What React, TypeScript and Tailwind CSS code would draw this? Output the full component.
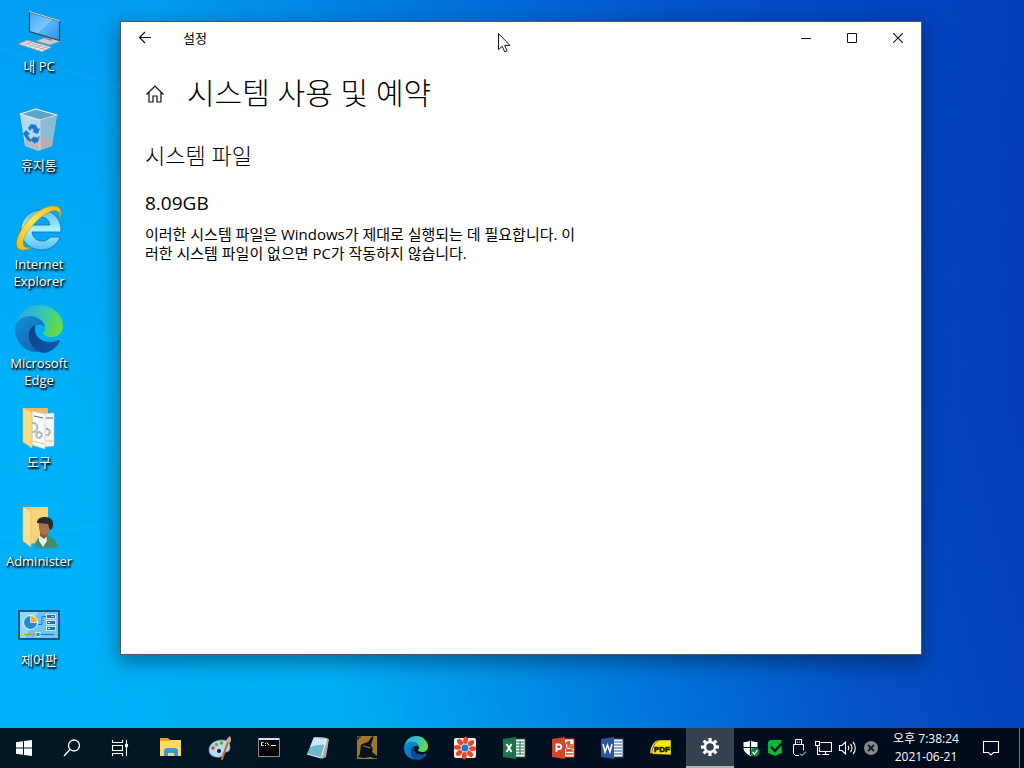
import type { ReactNode } from "react";

type Item = { label: string; icon: ReactNode };

/* ---------- shared drawings ---------- */

function EdgeLogo({ size, id }: { size: number; id: string }) {
  return (
    <svg width={size} height={size} viewBox="0 0 48 48" aria-hidden="true">
      <defs>
        <linearGradient id={id + "top"} x1="0" y1="0.3" x2="1" y2="0.6">
          <stop offset="0" stopColor="#2aa8e0" />
          <stop offset="0.45" stopColor="#2fc3c4" />
          <stop offset="1" stopColor="#66dc3c" />
        </linearGradient>
        <linearGradient id={id + "mid"} x1="0" y1="0" x2="0.6" y2="1">
          <stop offset="0" stopColor="#1390d8" />
          <stop offset="1" stopColor="#1266b8" />
        </linearGradient>
        <linearGradient id={id + "low"} x1="0" y1="0.2" x2="1" y2="0.8">
          <stop offset="0" stopColor="#11418b" />
          <stop offset="1" stopColor="#0c5aa6" />
        </linearGradient>
      </defs>
      <path d="M1 21C2 9 12 0 24 0c14 0 24 10 24 21 0 7-5 11-11 11-6 0-9-2-9-4 0-1 2-2 2-5 0-6-6-11-14-11C9 12 3 15 1 21Z" fill={`url(#${id}top)`} />
      <path d="M0 24C0 16 7 11 15 11c8 0 14 5 15 11-3-3-8-3-12 1-6 6-4 18 6 24C10 48 0 37 0 24Z" fill={`url(#${id}mid)`} />
      <path d="M19 20c-5 4-7 11-4 17 3 7 9 11 15 11 7-2 12-6 15-12 0-1-1-1-2-1-3 2-6 2-9 2-8 0-14-6-14-12 0-2 0-4-1-5Z" fill={`url(#${id}low)`} />
    </svg>
  );
}

/* ---------- desktop icons ---------- */

const ComputerIcon = () => (
  <svg width="48" height="48" viewBox="0 0 48 48" aria-hidden="true">
    <defs>
      <linearGradient id="screen" x1="0" y1="0" x2="1" y2="1">
        <stop offset="0" stopColor="#3fa6f2" />
        <stop offset="0.5" stopColor="#7cc8ff" />
        <stop offset="0.52" stopColor="#56b4f8" />
        <stop offset="1" stopColor="#2b95ec" />
      </linearGradient>
    </defs>
    <path d="M21 33l11-4 14 4-11 4Z" fill="#c7cdd1" stroke="#8c979e" strokeWidth=".7" />
    <path d="M30 26l7 2v5l-7-2Z" fill="#8c9498" />
    <path d="M14.500 4l30 9v19.500l-30-9Z" fill="url(#screen)" stroke="#37454e" strokeWidth="1.200" />
    <path d="M14 3.500l31 9.300" stroke="#d8d6cd" />
    <path d="M3 36l9-4 25 7-10 5Z" fill="#e4e7e8" stroke="#7d868b" strokeWidth=".8" />
    <path d="M6 34.500l24 7M9 33.200l24 7M9 37.500l9-4M14 39l9-4M19 40.500l9-4M24 42l9-4" stroke="#a0a8ac" strokeWidth=".7" />
  </svg>
);

const RecycleBinIcon = () => (
  <svg width="48" height="48" viewBox="0 0 48 48" aria-hidden="true">
    <path d="M5 7l16-5 21 6-5 31-14 5-13-5Z" fill="#c9dde8" fillOpacity=".7" />
    <path d="M5 7l16-5 21 6-17 5Z" fill="#5aa5c6" stroke="#e7f1f5" strokeWidth="1.200" strokeLinejoin="round" />
    <path d="M25 13l17-5-5 31-12 4Z" fill="#8fb4cb" fillOpacity=".75" />
    <path d="M5 7l20 6v30L10 38Z" fill="#c9e0ee" fillOpacity=".65" />
    <path d="M9 33l14-4 15 4-1 6-12 4-15-5Z" fill="#c4a9a6" fillOpacity=".7" />
    <path d="M25 13v30" stroke="#dbe9f0" strokeWidth=".7" />
    <g fill="#1779cf">
      <path d="M13 21l3-4 5 1 2 4 2-1-2 6-6-2 2-1-2-3-2 3Z" />
      <path d="M11 23l4 4-2 1 2 4h2l-1 3-4-2-3-5-1-1Z" />
      <path d="M19 30l4 1 2-3-2 7-3 1v1l-4-4 3-4Z" />
    </g>
  </svg>
);

const ExplorerEIcon = () => (
  <svg width="48" height="48" viewBox="0 0 48 48" aria-hidden="true">
    <defs>
      <linearGradient id="ieblue" x1="0" y1="0" x2="0" y2="1">
        <stop offset="0" stopColor="#58bff0" />
        <stop offset=".5" stopColor="#a8f3ff" />
        <stop offset="1" stopColor="#52bff1" />
      </linearGradient>
      <linearGradient id="iegold" x1="0" y1="1" x2="1" y2="0">
        <stop offset="0" stopColor="#f4b80c" />
        <stop offset=".5" stopColor="#ffe45a" />
        <stop offset="1" stopColor="#f3b60e" />
      </linearGradient>
    </defs>
    <path fillRule="evenodd" d="M46 26H17c1 6 5 9 10 9 4 0 6-1 8-4h10c-3 8-10 13-18 13C15 44 6 36 6 24 6 12 15 4 26 4c12 0 21 9 20 22ZM17 19h18c-1-5-4-8-9-8s-8 3-9 8Z" fill="url(#ieblue)" stroke="#2174ad" strokeWidth=".9" />
    <path d="M45 12C47 6 46 1 40 0 31-1 18 7 9 20 2 30-1 40 4 43c3 2 8 1 13-2-4 1-7 1-8-1-3-4 2-14 10-22C27 9 37 3 42 5c3 1 3 4 3 7Z" fill="url(#iegold)" stroke="#c78b0b" strokeWidth=".6" />
  </svg>
);

const ToolsFolderIcon = () => (
  <svg width="48" height="48" viewBox="0 0 48 48" aria-hidden="true">
    <path d="M8 4h25v34H13Z" fill="#e8bd5b" />
    <path d="M26 10l13-1v33l-12 1Z" fill="#f4f5f5" stroke="#c6c8c9" strokeWidth=".6" />
    <path d="M17 7l13 3v35l-13-4Z" fill="#fbfbfb" stroke="#bfc5c8" strokeWidth=".6" />
    <path d="M19 12l9 2M31 14h7" stroke="#394047" strokeWidth=".8" />
    <g fill="none" stroke="#a3b0b7" strokeWidth="2.200" strokeDasharray="2 .4">
      <path d="M17 19c7-1 7 10 0 9" />
      <circle cx="24" cy="31" r="2.800" />
      <path d="M31 25c5-1 5 7 0 6" />
    </g>
    <path d="M18 37l11 3M31 37h7" stroke="#d9b660" strokeWidth=".8" />
    <path d="M8 4l9 4v36l-9-6Z" fill="#fbdc87" stroke="#e6be60" strokeWidth=".6" />
  </svg>
);

const UserFolderIcon = () => (
  <svg width="48" height="48" viewBox="0 0 48 48" aria-hidden="true">
    <path d="M8 4h25v33H12Z" fill="#f1cb6e" />
    <path d="M16 8l17-4v33l-17 4Z" fill="#f8d37a" />
    <path d="M8 4l8 4v36l-8-6Z" fill="#fcdf91" stroke="#e6be60" strokeWidth=".6" />
    <path d="M20 44c0-7 4-11 11-12 7 2 11 6 12 12-6 2-17 2-23 0Z" fill="#438d6b" />
    <path d="M24 33l7-2 1 7-4 6-4-6Z" fill="#e9eee9" />
    <path d="M25 25h8v7l-4 4-4-3Z" fill="#8b5a39" />
    <path d="M24 18c-1 8 1 14 5 14 5 0 8-6 8-12l-5-4Z" fill="#a7714d" />
    <path d="M22 20c0-4 3-6 8-6 6 0 9 4 8 9-1 4-3 4-3 4l-2-6c-4 0-7-1-11-1Z" fill="#292b2b" />
  </svg>
);

const ControlPanelIcon = () => (
  <svg width="48" height="48" viewBox="0 0 48 48" aria-hidden="true">
    <rect x="4" y="9" width="40" height="28" fill="#6fc4f4" stroke="#155985" strokeWidth="2" />
    <path d="M5 10h18L10 36H5Z" fill="#93d7fa" />
    <circle cx="15.500" cy="20.500" r="7" fill="#2787d4" stroke="#effaff" />
    <path d="M15.500 20.500V13.500a7 7 0 0 1 7 7Z" fill="#f4ae2d" stroke="#fff" strokeWidth=".7" />
    <path d="M23 22.500h4v-8h4" fill="none" stroke="#187cc1" />
    <g fill="#1677bb" stroke="#eaf9ff" strokeWidth=".8">
      <rect x="31.500" y="12.500" width="9" height="4" />
      <rect x="31.500" y="18.500" width="9" height="4" />
      <rect x="31.500" y="24.500" width="9" height="4" />
    </g>
    <path d="M36 14.500h3" stroke="#f2b13b" />
    <path d="M33 20.500h2M33 26.500h2" stroke="#fff" />
    <path d="M9 32.500h12" stroke="#df8f18" strokeWidth="1.200" />
    <path d="M25 32.500h14" stroke="#2379aa" strokeWidth="1" />
    <rect x="21" y="30.500" width="4" height="4" fill="#178ad5" stroke="#fff" strokeWidth=".7" />
  </svg>
);

const desktopItems: Item[] = [
  { label: "내 PC", icon: <ComputerIcon /> },
  { label: "휴지통", icon: <RecycleBinIcon /> },
  { label: "Internet Explorer", icon: <ExplorerEIcon /> },
  { label: "Microsoft Edge", icon: <EdgeLogo size={48} id="desk" /> },
  { label: "도구", icon: <ToolsFolderIcon /> },
  { label: "Administer", icon: <UserFolderIcon /> },
  { label: "제어판", icon: <ControlPanelIcon /> },
];

/* ---------- taskbar icons ---------- */

const StartIcon = () => (
  <svg width="16" height="16" viewBox="0 0 16 16" fill="#fff" aria-hidden="true">
    <path d="M0 2.200L7 1.200V7.500H0ZM8 1L16 0v7.500H8ZM0 8.500h7v6.300l-7-1ZM8 8.500h8V16l-8-1Z" />
  </svg>
);

const SearchIcon = () => (
  <svg width="18" height="18" viewBox="0 0 18 18" fill="none" stroke="#fff" strokeWidth="1.300" aria-hidden="true">
    <circle cx="11" cy="6.500" r="5.500" />
    <path d="M7 10.500L1 17" />
  </svg>
);

const TaskViewIcon = () => (
  <svg width="18" height="16" viewBox="0 0 18 16" fill="none" stroke="#fff" strokeWidth="1.100" aria-hidden="true">
    <path d="M1.500 0v2.500h10V0M1.500 16v-2.500h10V16M15.500 0v16" />
    <rect x="1.500" y="5.500" width="10" height="5" />
    <rect x="14.500" y="4.500" width="2" height="2" fill="#fff" />
  </svg>
);

const taskItems: Item[] = [
  {
    label: "파일 탐색기",
    icon: (
      <svg width="24" height="24" viewBox="0 0 24 24" aria-hidden="true">
        <path d="M1 2h8l2 2h11v16H1Z" fill="#e8a51d" />
        <path d="M1 5h8l2-1h11v16H1Z" fill="#ffd867" />
        <path d="M5 20v-6l2-2h10l2 2v6h-4v-3H9v3Z" fill="#3a96de" />
      </svg>
    ),
  },
  {
    label: "그림판",
    icon: (
      <svg width="24" height="24" viewBox="0 0 24 24" aria-hidden="true">
        <path d="M1 14C1 8 7 4 14 4c6 0 8 3 8 7s-2 5-4 5-2 5-6 5C6 22 1 19 1 14Z" fill="#b8d9ee" stroke="#6d9bb9" strokeWidth=".7" />
        <circle cx="5" cy="12" r="1.800" fill="#df3c26" />
        <circle cx="8.500" cy="8.500" r="1.800" fill="#71b52e" />
        <circle cx="13.500" cy="7" r="1.800" fill="#59a63b" />
        <circle cx="11" cy="15" r="2" fill="#071923" />
        <path d="M20 6l-6 17" stroke="#c36a26" strokeWidth="2.200" strokeLinecap="round" />
        <path d="M18 6c0-3 2-4 4-6 1 3 2 3 0 7Z" fill="#d6a77a" />
      </svg>
    ),
  },
  {
    label: "명령 프롬프트",
    icon: (
      <svg width="24" height="24" viewBox="0 0 24 24" aria-hidden="true">
        <rect x="1.500" y="2.500" width="21" height="18" fill="#050505" stroke="#858b8e" />
        <path d="M2 3h20" stroke="#d7dcdf" strokeWidth="2" />
        <path d="M6.500 6.500H4.500v3h2M8.500 7v1M8.500 9v1M10 6.500l2 3M14 9.500h5" fill="none" stroke="#fff" strokeWidth="1" />
      </svg>
    ),
  },
  {
    label: "메모장",
    icon: (
      <svg width="24" height="24" viewBox="0 0 24 24" aria-hidden="true">
        <path d="M8 1l15 2-3 18-4 2Z" fill="#a6aeb0" />
        <path d="M8 1l13 1-6 20-14-4Z" fill="#72b5c9" />
        <path d="M8 1l13 1-2 7C12 8 9 10 4 11Z" fill="#c6eaf0" />
        <path d="M1 18l14 4 6-20" fill="none" stroke="#e9f4f5" />
        <path d="M8 1.500l13 1" stroke="#8b969a" strokeDasharray="1 1" />
      </svg>
    ),
  },
  {
    label: "청소 도구",
    icon: (
      <svg width="24" height="24" viewBox="0 0 24 24" aria-hidden="true">
        <rect x="2" y="0" width="20" height="23" fill="#9d7626" />
        <path d="M18 0c1 3-2 6-2 10 2 1 2 4 1 6l5 4v2c-3 1-5-1-7-1s-5 2-12 0c3-3 2-8 3-12 2-2 6-2 8-4 1-2 2-4 4-5Z" fill="#03121c" />
        <path d="M3 1h3M3 1v3" stroke="#03121c" strokeWidth="1.200" />
        <path d="M8 10c3 0 5 2 8 2" fill="none" stroke="#9d7626" strokeWidth="1.200" />
      </svg>
    ),
  },
  { label: "Microsoft Edge", icon: <EdgeLogo size={24} id="bar" /> },
  {
    label: "사진 뷰어",
    icon: (
      <svg width="24" height="24" viewBox="0 0 24 24" aria-hidden="true">
        <rect x="1" y="2" width="22" height="20" rx="2" fill="#eef1f3" />
        <g fill="#ee4523">
          {[5, 50, 95, 140, 185, 230, 275, 320].map((angle) => (
            <ellipse key={angle} cx="12" cy="4.300" rx="2.400" ry="3.600" transform={`rotate(${angle} 12 12)`} />
          ))}
        </g>
        <circle cx="12" cy="12" r="3.500" fill="#1976d2" />
      </svg>
    ),
  },
  {
    label: "Excel",
    icon: (
      <svg width="24" height="24" viewBox="0 0 24 24" aria-hidden="true">
        <rect x="12" y="3" width="11" height="18" fill="#fff" stroke="#207346" />
        <path d="M14 6h8M14 9h8M14 12h8M14 15h8M14 18h8M18 5v14" stroke="#207346" />
        <path d="M1 3l13-2v22L1 21Z" fill="#207346" />
        <path d="M4.500 8l5 8M9.500 8l-5 8" stroke="#fff" strokeWidth="1.900" />
      </svg>
    ),
  },
  {
    label: "PowerPoint",
    icon: (
      <svg width="24" height="24" viewBox="0 0 24 24" aria-hidden="true">
        <rect x="12" y="3" width="11" height="18" fill="#fff" stroke="#d24726" />
        <path d="M15 15h7M15 18h7M17 6v5h5a4 4 0 1 1-5-5ZM18.500 5v4h4" fill="none" stroke="#d24726" strokeWidth="1.400" />
        <path d="M1 3l13-2v22L1 21Z" fill="#d24726" />
        <path d="M5.500 16V8.500H8a2 2 0 0 1 0 4.500H5.500" fill="none" stroke="#fff" strokeWidth="1.900" />
      </svg>
    ),
  },
  {
    label: "Word",
    icon: (
      <svg width="24" height="24" viewBox="0 0 24 24" aria-hidden="true">
        <rect x="12" y="3" width="11" height="18" fill="#fff" stroke="#2b579a" />
        <path d="M14 6h8M14 9h8M14 12h8M14 15h8M14 18h8" stroke="#2b579a" />
        <path d="M1 3l13-2v22L1 21Z" fill="#2b579a" />
        <path d="M3 8l2 8 2.500-7L10 16l2-8" fill="none" stroke="#fff" strokeWidth="1.500" />
      </svg>
    ),
  },
  {
    label: "PDF",
    icon: (
      <svg width="24" height="24" viewBox="0 0 24 24" aria-hidden="true">
        <path d="M1 17C2 9 5 5 10 4L7 18Z" fill="#d9d79a" />
        <path d="M3 18C3 11 6 6 11 4h11v15Z" fill="#fbe716" stroke="#16150a" strokeWidth=".5" />
        <text x="13" y="16" textAnchor="middle" fontFamily="Liberation Sans, sans-serif" fontWeight="bold" fontSize="8" fill="#171700" stroke="#171700" strokeWidth=".6">PDF</text>
      </svg>
    ),
  },
];

const SettingsIcon = () => (
  <svg width="20" height="20" viewBox="0 0 20 20" fill="none" stroke="#fff" aria-hidden="true">
    <circle cx="10" cy="10" r="5" strokeWidth="2.400" />
    {[0, 45, 90, 135, 180, 225, 270, 315].map((angle) => (
      <path key={angle} d="M10 4.500V1" strokeWidth="3.200" transform={`rotate(${angle} 10 10)`} />
    ))}
  </svg>
);

const trayItems: Item[] = [
  {
    label: "Windows 보안",
    icon: (
      <svg width="18" height="18" viewBox="0 0 18 18" aria-hidden="true">
        <path d="M8.500 1C6 3 4 3 1.500 3v6c0 4 4 6 7 8 3-2 7-4 7-8V3c-3 0-4.500 0-7-2Z" fill="#fff" />
        <path d="M8.500 1v15M1 8.500h15" stroke="#020f1c" strokeWidth="1.200" />
        <circle cx="13" cy="13" r="4.500" fill="#108044" />
        <path d="M10.500 13l2 2 3-4" fill="none" stroke="#fff" strokeWidth="1.200" />
      </svg>
    ),
  },
  {
    label: "백신",
    icon: (
      <svg width="18" height="18" viewBox="0 0 18 18" aria-hidden="true">
        <path d="M4 1h11l1 13-7 3-7-3V3Z" fill="#06b73a" />
        <path d="M5 8l4 4 6-7" fill="none" stroke="#02141b" strokeWidth="2.400" />
      </svg>
    ),
  },
  {
    label: "하드웨어 안전하게 제거",
    icon: (
      <svg width="18" height="18" viewBox="0 0 18 18" fill="none" stroke="#fff" aria-hidden="true">
        <path d="M5.500 5.500v-5h6v5M7 3h1M9 3h1M9 16.500H5.500l-2-2v-9h10v6M10 14.500l2 2 4-4" />
      </svg>
    ),
  },
  {
    label: "네트워크",
    icon: (
      <svg width="18" height="18" viewBox="0 0 18 18" fill="none" stroke="#fff" strokeWidth="1.100" aria-hidden="true">
        <path d="M6.500 3.500h11v9H5.500V8M8 15.500h7M11.500 12.500v3M1.500 2.500h4v4h-4ZM3.500 6.500v9h3" />
      </svg>
    ),
  },
  {
    label: "볼륨",
    icon: (
      <svg width="18" height="18" viewBox="0 0 18 18" fill="none" stroke="#fff" strokeWidth="1.100" aria-hidden="true">
        <path d="M1.500 6.500H4L7.500 3v12L4 11.500H1.500ZM10 7c1 1 1 3 0 4M12.500 5c2 2 2 6 0 8M15 3c3 3 3 9 0 12" />
      </svg>
    ),
  },
  {
    label: "꺼짐",
    icon: (
      <svg width="16" height="16" viewBox="0 0 16 16" aria-hidden="true">
        <circle cx="8" cy="8" r="7" fill="#868a8d" />
        <path d="M5 5l6 6M11 5l-6 6" stroke="#111820" strokeWidth="1.800" />
      </svg>
    ),
  },
];

/* ---------- page ---------- */

function SettingsWindow() {
  return (
    <section
      aria-label="설정"
      className="absolute top-[21px] right-[102px] bottom-[73px] left-[120px] flex flex-col border border-[#555] bg-white text-black shadow-[0_6px_18px_2px_rgba(0,0,0,0.35)]"
    >
      <header className="flex h-8 items-center">
        <button type="button" aria-label="뒤로" className="flex h-8 w-12 items-center justify-center">
          <svg width="14" height="14" viewBox="0 0 14 14" fill="none" stroke="#111" strokeWidth="1.200" aria-hidden="true">
            <path d="M13 6.500H1.500M7 1L1.500 6.500 7 12" />
          </svg>
        </button>
        <span className="ml-3.5 text-[13px] leading-4">설정</span>
        <div className="ml-auto flex">
          <button type="button" aria-label="최소화" className="flex h-8 w-[46px] items-center justify-center">
            <svg width="10" height="10" viewBox="0 0 10 10" stroke="#111" aria-hidden="true"><path d="M0 5.500h10" /></svg>
          </button>
          <button type="button" aria-label="최대화" className="flex h-8 w-[46px] items-center justify-center">
            <svg width="10" height="10" viewBox="0 0 10 10" fill="none" stroke="#111" aria-hidden="true"><path d="M.5.5h9v9h-9Z" /></svg>
          </button>
          <button type="button" aria-label="닫기" className="flex h-8 w-[46px] items-center justify-center">
            <svg width="10" height="10" viewBox="0 0 10 10" stroke="#111" strokeWidth="1.100" aria-hidden="true"><path d="M0 0l10 10M10 0L0 10" /></svg>
          </button>
        </div>
      </header>
      <div className="flex flex-col px-6 pt-5">
        <div className="flex h-10 items-center gap-[22px]">
          <button type="button" aria-label="홈" className="flex w-5 justify-center">
            <svg width="18" height="18" viewBox="0 0 18 18" fill="none" stroke="#111" strokeWidth="1.200" aria-hidden="true">
              <path d="M.5 9.500L9 1l8.500 8.500M3 7v10h4v-6h4v6h4V7" />
            </svg>
          </button>
          <h1 className="pb-0.5 text-[30px] leading-10 font-light">시스템 사용 및 예약</h1>
        </div>
        <h2 className="mt-[25px] text-[22px] leading-8 font-light">시스템 파일</h2>
        <p className="mt-5 text-[19px] leading-6">8.09GB</p>
        <p className="mt-2.5 max-w-[440px] text-[15px] leading-[19px] break-all">
          이러한 시스템 파일은 Windows가 제대로 실행되는 데 필요합니다. 이러한 시스템 파일이 없으면 PC가 작동하지 않습니다.
        </p>
      </div>
    </section>
  );
}

export default function App() {
  return (
    <div className="flex min-h-screen flex-col overflow-hidden bg-[linear-gradient(75deg,#00b2fa_0%,#00aef5_29%,#0092e6_42%,#0070d8_57%,#0452c4_71%,#0444be_84%,#0438b0_100%)] font-['Open_Sans','Noto_Sans_CJK_KR',sans-serif]">
      <main className="relative flex-1 bg-[linear-gradient(to_bottom,rgba(0,90,225,0.2),transparent_55%)]">
        <svg className="absolute inset-0 h-full w-full" viewBox="0 0 1024 728" preserveAspectRatio="none" aria-hidden="true">
          <path d="M0 48L120 88M0 538L120 523" stroke="#fff" strokeOpacity=".05" />
        </svg>
        <nav aria-label="바탕 화면" className="relative flex w-[78px] flex-col">
          {desktopItems.map((item) => (
            <a key={item.label} href="#" className="flex h-[99px] flex-col items-center pt-2">
              {item.icon}
              <span className="mt-0.5 text-center text-[13px] leading-[17px] text-white [text-shadow:1px_1px_2px_#000,1px_2px_2px_#000]">
                {item.label}
              </span>
            </a>
          ))}
        </nav>
        <SettingsWindow />
        <svg className="absolute top-[33px] left-[498px]" width="13" height="20" viewBox="0 0 13 20" aria-hidden="true">
          <path d="M.5.5v16.200l3.700-3.500 2.500 5.600 2.400-1-2.400-5.400h5.200Z" fill="#fff" stroke="#111c28" />
        </svg>
      </main>
      <footer className="flex h-10 items-center bg-[linear-gradient(to_right,#001a24,#000f1f_60%,#000a1a)] text-white">
        <button type="button" aria-label="시작" className="flex h-10 w-12 items-center justify-center"><StartIcon /></button>
        <button type="button" aria-label="검색" className="flex h-10 w-12 items-center justify-center"><SearchIcon /></button>
        <button type="button" aria-label="작업 보기" className="flex h-10 w-12 items-center justify-center"><TaskViewIcon /></button>
        <div className="ml-[3px] flex gap-px">
          {taskItems.map((item) => (
            <button key={item.label} type="button" aria-label={item.label} className="flex h-10 w-12 items-center justify-center">
              {item.icon}
            </button>
          ))}
          <button type="button" aria-label="설정" className="flex h-10 w-12 items-center justify-center border-b-2 border-[#b0b4b8] bg-[#36424f]">
            <SettingsIcon />
          </button>
        </div>
        <div className="ml-auto flex items-center">
          <div className="mr-[3px] flex">
            {trayItems.map((item) => (
              <button key={item.label} type="button" aria-label={item.label} className="flex h-10 w-6 items-center justify-center">
                {item.icon}
              </button>
            ))}
          </div>
          <button type="button" className="flex w-20 flex-col items-center text-xs leading-[18px] whitespace-nowrap">
            <span>오후 7:38:24</span>
            <span>2021-06-21</span>
          </button>
          <button type="button" aria-label="알림 센터" className="flex h-10 w-[50px] items-center justify-center">
            <svg width="18" height="18" viewBox="0 0 18 18" fill="none" stroke="#fff" strokeWidth="1.100" aria-hidden="true">
              <path d="M1.500 2.500h15v11h-5L9 16l-2.500-2.500h-5Z" />
            </svg>
          </button>
          <button type="button" aria-label="바탕 화면 보기" className="ml-[3px] h-10 w-[5px] border-l border-[#6b7580]" />
        </div>
      </footer>
    </div>
  );
}
